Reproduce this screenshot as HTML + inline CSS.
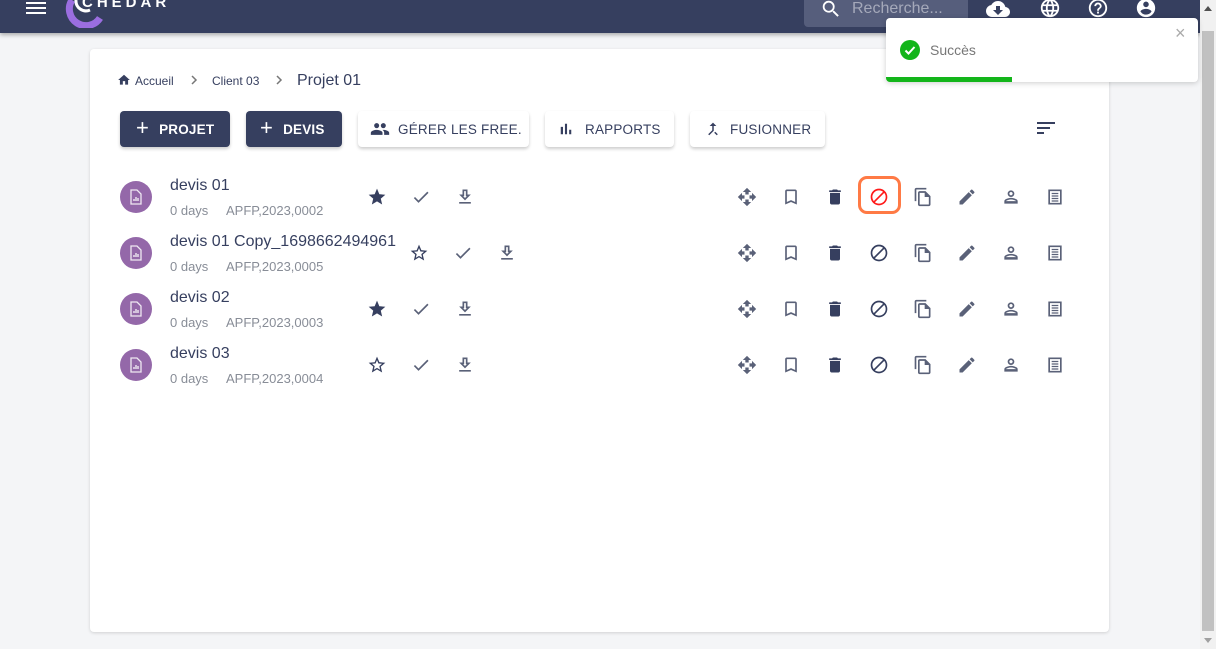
<!DOCTYPE html>
<html><head><meta charset="utf-8"><style>
*{margin:0;padding:0;box-sizing:border-box}
body{width:1216px;height:649px;overflow:hidden;background:#f4f5f7;font-family:"Liberation Sans",sans-serif;position:relative}
.hdr{position:absolute;left:0;top:0;width:1200px;height:33px;background:#363f5f;box-shadow:0 2px 4px rgba(0,0,0,.3)}
.card{position:absolute;left:90px;top:49px;width:1019px;height:583px;background:#fff;border-radius:4px;box-shadow:0 1px 3px rgba(0,0,0,.15)}
.ab{position:absolute}
svg{display:block}
.btn{position:absolute;top:111px;height:36px;border-radius:4px;font-size:13.5px;font-weight:bold;display:flex;align-items:center;letter-spacing:.2px;box-shadow:0 2px 3px rgba(0,0,0,.2)}
.dk{background:#363f5f;color:#fff}
.lt{background:#fff;color:#363f5f;font-weight:normal}
.title{position:absolute;left:170px;font-size:16px;color:#363f5f}
.sub{position:absolute;left:170px;font-size:13px;color:#888d97}
.av{position:absolute;left:120px;width:32px;height:32px;border-radius:50%;background:#9468a9}
.ic{position:absolute;width:20px;height:20px}
</style></head><body>
<div class="hdr">
 <div class="ab" style="left:26px;top:0"><div style="width:20px;height:2px;background:#fff;margin-top:2px"></div><div style="width:20px;height:2px;background:#fff;margin-top:3px"></div><div style="width:20px;height:2px;background:#fff;margin-top:3px"></div></div>
 <svg class="ab" style="left:64px;top:0" width="40" height="28"><path d="M8 0 A16 16 0 0 0 36 18" stroke="#9b6ee0" stroke-width="7" fill="none"/><path d="M12 0 A10 10 0 0 0 26 10" stroke="#fff" stroke-width="3" fill="none"/></svg>
 <div class="ab" style="left:82px;top:-6px;color:#fff;font-size:15px;letter-spacing:4px;font-weight:bold">CHEDAR</div>
 <div class="ab" style="left:804px;top:0;width:164px;height:27px;background:#565e7c;border-radius:0 0 4px 4px"></div>
 <svg class="ab" style="left:820px;top:-2px" width="22" height="22" viewBox="0 0 24 24"><path fill="#fff" d="M15.5 14h-.79l-.28-.27A6.47 6.47 0 0 0 16 9.5 6.5 6.5 0 1 0 9.5 16c1.61 0 3.09-.59 4.23-1.57l.27.28v.79l5 4.99L20.49 19l-4.99-5zm-6 0C7.01 14 5 11.99 5 9.5S7.01 5 9.5 5 14 7.01 14 9.5 11.99 14 9.5 14z"/></svg>
 <div class="ab" style="left:852px;top:0;color:#a5a9ba;font-size:16px">Recherche...</div>
 <svg class="ab" style="left:985px;top:-3px" width="26" height="24" viewBox="0 0 24 24"><path fill="#fff" d="M19.35 10.04A7.49 7.49 0 0 0 12 4C9.11 4 6.6 5.64 5.35 8.04A5.994 5.994 0 0 0 0 14c0 3.31 2.69 6 6 6h13c2.76 0 5-2.24 5-5 0-2.64-2.05-4.78-4.65-4.96zM17 13l-5 5-5-5h3V9h4v4h3z"/></svg>
 <svg class="ab" style="left:1039px;top:-3px" width="22" height="22" viewBox="0 0 24 24"><path fill="#fff" d="M11.99 2C6.47 2 2 6.48 2 12s4.47 10 9.99 10C17.52 22 22 17.520 22 12S17.52 2 11.99 2zm6.930 6h-2.95a15.65 15.65 0 0 0-1.38-3.56A8.03 8.03 0 0 1 18.92 8zM12 4.04c.83 1.2 1.48 2.53 1.91 3.96h-3.82c.43-1.43 1.08-2.76 1.91-3.96zM4.26 14C4.1 13.36 4 12.69 4 12s.1-1.36.26-2h3.38c-.08.66-.14 1.32-.14 2s.06 1.34.14 2H4.26zm.82 2h2.95c.32 1.25.78 2.45 1.38 3.56A7.987 7.987 0 0 1 5.08 16zm2.95-8H5.08a7.987 7.987 0 0 1 4.33-3.56A15.65 15.65 0 0 0 8.03 8zM12 19.96c-.83-1.2-1.48-2.53-1.91-3.96h3.820c-.43 1.43-1.080 2.76-1.91 3.96zM14.34 14H9.66c-.09-.66-.16-1.32-.16-2s.07-1.35.16-2h4.68c.09.65.16 1.32.16 2s-.07 1.34-.16 2zm.25 5.56c.6-1.11 1.06-2.31 1.38-3.56h2.95a8.03 8.03 0 0 1-4.33 3.56zM16.36 14c.08-.66.14-1.32.14-2s-.06-1.34-.14-2h3.38c.16.64.26 1.31.26 2s-.1 1.36-.26 2h-3.38z"/></svg>
 <svg class="ab" style="left:1087px;top:-3px" width="22" height="22" viewBox="0 0 24 24"><path fill="#fff" d="M11 18h2v-2h-2v2zm1-16C6.48 2 2 6.48 2 12s4.48 10 10 10 10-4.48 10-10S17.52 2 12 2zm0 18c-4.41 0-8-3.59-8-8s3.59-8 8-8 8 3.59 8 8-3.59 8-8 8zm0-14c-2.21 0-4 1.79-4 4h2c0-1.1.9-2 2-2s2 .9 2 2c0 2-3 1.75-3 5h2c0-2.25 3-2.5 3-5 0-2.21-1.79-4-4-4z"/></svg>
 <svg class="ab" style="left:1135px;top:-3px" width="22" height="22" viewBox="0 0 24 24"><path fill="#fff" d="M12 2C6.48 2 2 6.48 2 12s4.48 10 10 10 10-4.48 10-10S17.52 2 12 2zm0 3c1.66 0 3 1.34 3 3s-1.34 3-3 3-3-1.34-3-3 1.34-3 3-3zm0 14.2a7.2 7.2 0 0 1-6-3.22c.03-1.99 4-3.08 6-3.08 1.99 0 5.97 1.09 6 3.08a7.2 7.2 0 0 1-6 3.22z"/></svg>
</div>
<div class="ab" style="left:1200px;top:0;width:16px;height:649px;background:#f1f1f1"></div>
<div class="ab" style="left:1202px;top:31px;width:12px;height:600px;background:#c1c1c1"></div>
<div class="ab" style="left:1204px;top:6px;width:0;height:0;border-left:4px solid transparent;border-right:4px solid transparent;border-bottom:5px solid #505050"></div>
<div class="ab" style="left:1204px;top:638px;width:0;height:0;border-left:4px solid transparent;border-right:4px solid transparent;border-top:5px solid #a0a0a0"></div>

<div class="card"></div>
<svg class="ab" style="left:117px;top:73px" width="14" height="14" viewBox="0 0 24 24"><path fill="#363f5f" d="M10 20v-6h4v6h5v-8h3L12 3 2 12h3v8z"/></svg>
<div class="ab" style="left:135px;top:74px;font-size:12px;color:#363f5f">Accueil</div>
<svg class="ab" style="left:189px;top:74px" width="10" height="12" viewBox="0 0 10 12"><path d="M3 2l4 4-4 4" stroke="#777" stroke-width="1.5" fill="none"/></svg>
<div class="ab" style="left:212px;top:74px;font-size:12px;color:#363f5f">Client 03</div>
<svg class="ab" style="left:274px;top:74px" width="10" height="12" viewBox="0 0 10 12"><path d="M3 2l4 4-4 4" stroke="#777" stroke-width="1.5" fill="none"/></svg>
<div class="ab" style="left:297px;top:72px;font-size:16px;color:#363f5f">Projet 01</div>

<div class="btn dk" style="left:120px;width:110px;padding-left:16px"><span style="font-size:22px;font-weight:normal;margin-right:10px;margin-top:-2px">+</span>PROJET</div>
<div class="btn dk" style="left:246px;width:96px;padding-left:14px"><span style="font-size:22px;font-weight:normal;margin-right:10px;margin-top:-2px">+</span>DEVIS</div>
<div class="btn lt" style="left:358px;width:171px;padding-left:12px"><svg width="20" height="20" viewBox="0 0 24 24" style="margin-right:8px"><path fill="#363f5f" d="M16 11c1.66 0 2.99-1.34 2.99-3S17.66 5 16 5c-1.66 0-3 1.34-3 3s1.34 3 3 3zm-8 0c1.66 0 2.99-1.34 2.99-3S9.66 5 8 5C6.34 5 5 6.34 5 8s1.34 3 3 3zm0 2c-2.33 0-7 1.17-7 3.5V19h14v-2.5c0-2.330-4.67-3.5-7-3.5zm8 0c-.29 0-.62.02-.97.05 1.16.84 1.97 1.97 1.97 3.45V19h6v-2.5c0-2.33-4.67-3.5-7-3.5z"/></svg>GÉRER LES FREE.</div>
<div class="btn lt" style="left:545px;width:129px;padding-left:12px"><svg width="18" height="18" viewBox="0 0 24 24" style="margin-right:10px"><path fill="#363f5f" d="M5 9.2h3V19H5zM10.6 5h2.8v14h-2.8zm5.6 8H19v6h-2.8z"/></svg>RAPPORTS</div>
<div class="btn lt" style="left:690px;width:135px;padding-left:14px"><svg width="18" height="18" viewBox="0 0 24 24" style="margin-right:8px"><path fill="#363f5f" d="M17 20.41 18.41 19 15 15.59 13.59 17 17 20.41zM7.5 8H11v5.59L5.59 19 7 20.41l6-6V8h3.5L12 3.5 7.5 8z"/></svg>FUSIONNER</div>
<div class="ab" style="left:1037px;top:122px"><div style="width:18px;height:2px;background:#363f5f"></div><div style="width:13px;height:2px;background:#363f5f;margin-top:3px"></div><div style="width:7px;height:2px;background:#363f5f;margin-top:3px"></div></div>

<div id="rows"></div>
<script>
const P={
star:'M12 17.27 18.18 21l-1.64-7.03L22 9.24l-7.19-.61L12 2 9.19 8.63 2 9.24l5.46 4.73L5.82 21z',
starO:'M22 9.24l-7.19-.62L12 2 9.19 8.63 2 9.24l5.46 4.73L5.82 21 12 17.27 18.18 21l-1.63-7.03L22 9.24zM12 15.4l-3.76 2.27 1-4.28-3.32-2.88 4.38-.38L12 6.1l1.71 4.04 4.38.38-3.32 2.88 1 4.28L12 15.4z',
check:'M9 16.17 4.83 12l-1.42 1.41L9 19 21 7l-1.41-1.41z',
dl:'M5 20h14v-2H5v2zM19 9h-4V3H9v6H5l7 7 7-7zM11 5h2v6h1.17L12 13.17 9.83 11H11V5z',
move:'M10 9h4V6h3l-5-5-5 5h3v3zm-1 1H6V7l-5 5 5 5v-3h3v-4zm14 2-5-5v3h-3v4h3v3l5-5zm-9 3h-4v3H7l5 5 5-5h-3v-3z',
bm:'M17 3H7c-1.1 0-1.99.9-1.99 2L5 21l7-3 7 3V5c0-1.1-.9-2-2-2zm0 15-5-2.18L7 18V5h10v13z',
del:'M6 19c0 1.1.9 2 2 2h8c1.1 0 2-.9 2-2V7H6v12zM19 4h-3.5l-1-1h-5l-1 1H5v2h14V4z',
block:'M12 2C6.48 2 2 6.48 2 12s4.48 10 10 10 10-4.48 10-10S17.52 2 12 2zM4 12c0-4.42 3.58-8 8-8 1.85 0 3.55.63 4.9 1.69L5.69 16.9A7.902 7.902 0 0 1 4 12zm8 8c-1.85 0-3.55-.63-4.9-1.69L18.31 7.1A7.902 7.902 0 0 1 20 12c0 4.42-3.58 8-8 8z',
copy:'M16 1H4c-1.1 0-2 .9-2 2v14h2V3h12V1zm-1 4H8c-1.1 0-1.99.9-1.99 2L6 21c0 1.1.89 2 1.99 2H19c1.1 0 2-.9 2-2V11l-6-6zM8 21V7h6v5h5v9H8z',
edit:'M3 17.25V21h3.75L17.81 9.94l-3.75-3.75L3 17.25zM20.71 7.04a.996.996 0 0 0 0-1.41l-2.34-2.34a.996.996 0 0 0-1.41 0l-1.83 1.83 3.75 3.75 1.83-1.83z',
user:'M12 6c1.1 0 2 .9 2 2s-.9 2-2 2-2-.9-2-2 .9-2 2-2m0 9c2.7 0 5.8 1.29 6 2H6c.23-.72 3.31-2 6-2m0-11C9.79 4 8 5.79 8 8s1.79 4 4 4 4-1.79 4-4-1.79-4-4-4zm0 9c-2.67 0-8 1.34-8 4v3h16v-3c0-2.66-5.33-4-8-4z',
list:'M4 3h16v18H4zM6 5v14h12V5zM8 7h8v1.5H8zm0 3h8v1.5H8zm0 3h8v1.5H8zm0 3h8v1.5H8z'
};
function ic(n,x,y,c){return `<svg class="ic" style="left:${x-10}px;top:${y-10}px" viewBox="0 0 24 24"><path fill="${c||'#363f5f'}" ${n=='list'?'fill-rule="evenodd"':''} d="${P[n]}"/></svg>`}
const rows=[['devis 01','0002',1,0],['devis 01 Copy_1698662494961','0005',0,42],['devis 02','0003',1,0],['devis 03','0004',0,0]];
let h='';
rows.forEach((r,i)=>{const y=197+56*i;
h+=`<div class="av" style="top:${y-16}px"><svg style="position:absolute;left:9px;top:8px" width="14" height="16" viewBox="0 0 14 16"><path d="M2 1h6l4 4v10H2z" fill="none" stroke="#fff" stroke-width="1.3" opacity=".85"/><path d="M5 12v-2M7 12v-4M9 12v-3" stroke="#fff" stroke-width="1.2"/></svg></div>`;
h+=`<div class="title" style="top:${y-20}px">${r[0]}</div><div class="sub" style="top:${y+6}px">0 days</div><div class="sub" style="left:226px;top:${y+6}px">APFP,2023,${r[1]}</div>`;
const o=r[3];
h+=ic(r[2]?'star':'starO',377+o,y)+ic('check',421+o,y,'#5a6178')+ic('dl',465+o,y,'#5a6178');
['move','bm','del','block','copy','edit','user','list'].forEach((n,k)=>{let c=n=='del'?'#363f5f':'#5a6178';if(n=='block')c=i==0?'#ff1a1a':'#363f5f';h+=ic(n,747+44*k,y,c)});
});
h+=`<div class="ab" style="left:858px;top:176px;width:43px;height:38px;border:3px solid #ff7a45;border-radius:9px"></div>`;
document.getElementById('rows').innerHTML=h;
</script>

<div class="ab" style="left:886px;top:18px;width:312px;height:64px;background:#fff;border-radius:4px;box-shadow:0 1px 6px rgba(0,0,0,.2);overflow:hidden">
 <div class="ab" style="left:14px;top:22px;width:20px;height:20px;border-radius:50%;background:#13b51a"><svg width="20" height="20" viewBox="0 0 20 20"><path d="M5.5 10.5l3 3 6-6.5" stroke="#fff" stroke-width="2" fill="none"/></svg></div>
 <div class="ab" style="left:44px;top:24px;font-size:14px;color:#777">Succès</div>
 <div class="ab" style="left:289px;top:5px;font-size:18px;color:#aaa">×</div>
 <div class="ab" style="left:0;top:59px;width:126px;height:5px;background:#13b51a"></div>
</div>
</body></html>
